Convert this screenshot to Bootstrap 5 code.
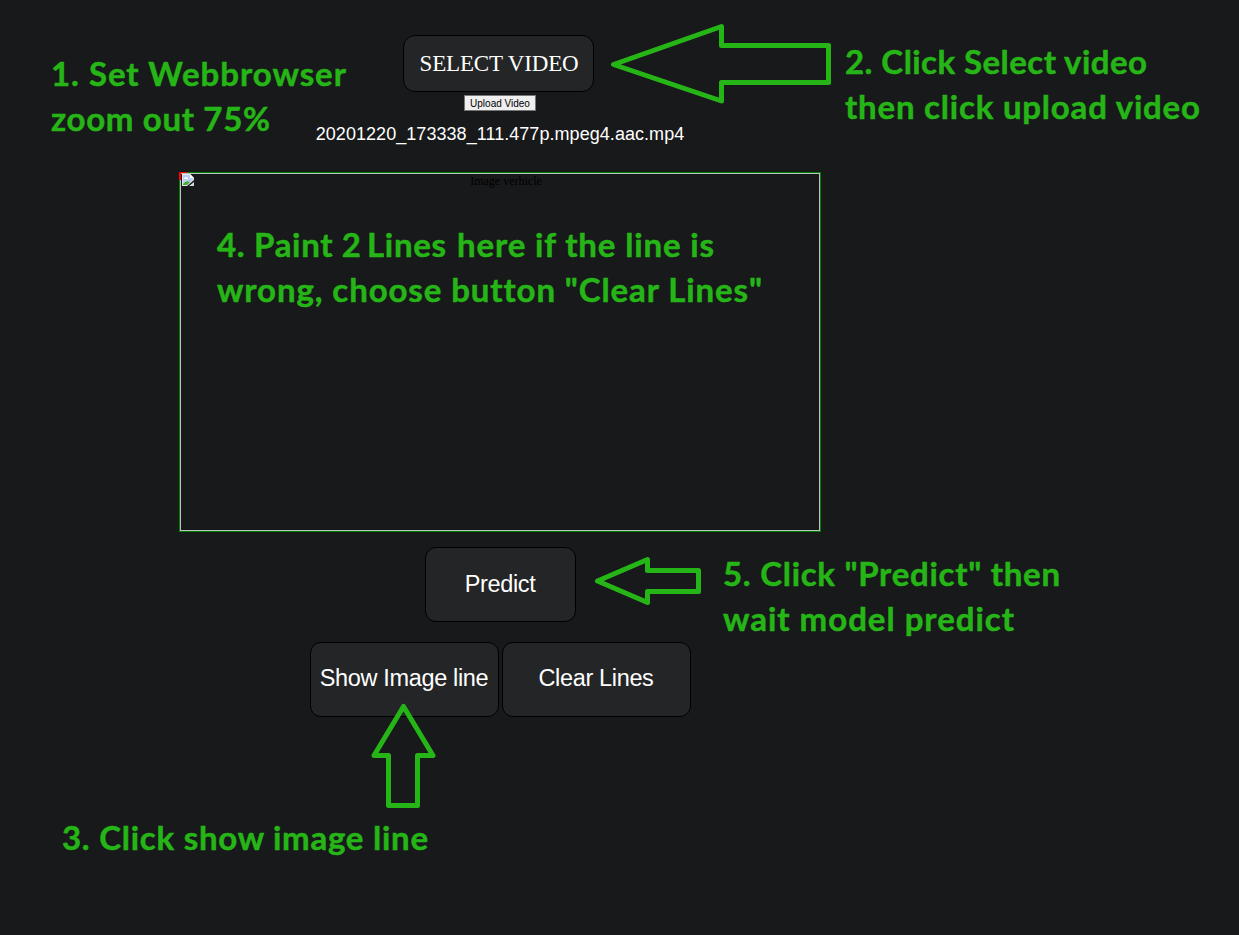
<!DOCTYPE html>
<html lang="en">
<head>
<meta charset="utf-8">
<title>Vehicle line prediction</title>
<link rel="stylesheet" href="https://cdn.jsdelivr.net/npm/bootstrap@5.3.0/dist/css/bootstrap.min.css">
<style>
body { background: #18191a; width: 1239px; height: 935px; overflow: hidden; font-family: "Liberation Sans", sans-serif; }
.app-col { width: 1000px; padding-top: 35px; }
.app-btn, .app-btn:hover { background: #242526; border: 1px solid #000; border-radius: 11px; color: #fff; font-size: 23.5px; line-height: 30px; padding: 0; white-space: nowrap; letter-spacing: -.35px; }
.btn-select { width: 191px; height: 57px; margin-left: -3px; }
.app-btn.btn-select { font-family: "Liberation Serif", serif; font-size: 23px; letter-spacing: -.15px; border-radius: 12px; padding-left: 1px; }
.btn-predict { width: 151px; height: 75px; margin-top: 15px; }
.app-btn.btn-predict { padding-bottom: 2px; }
.line-actions { gap: 3px; margin-top: 20px; }
.btn-line { width: 189px; height: 75px; }
.app-btn.btn-line { padding-bottom: 4px; }
.btn-upload { width: 72px; height: 16px; margin-top: 3px; background: #efefef; border: 1px solid #767676; color: #000; font-size: 10px; line-height: 13px; padding: 0; white-space: nowrap; }
.file-label { color: #fff; font-size: 18px; line-height: 22px; margin-top: 12px; height: 49px; letter-spacing: .05px; }
.line-canvas { width: 642px; height: 360px; border: 1px solid #008000; }
.line-frame { border: 1px solid #c0c0c0; }
.broken-icon { left: -1px; top: -1px; }
.alt-label { font-family: "Liberation Serif", serif; font-size: 12px; line-height: 14px; color: #000; padding-left: 12px; }
.note-layer text { font-family: Lato, "Open Sans", sans-serif; font-weight: 700; font-size: 33px; font-variant-ligatures: none; fill: #26b517; stroke: #26b517; stroke-width: .5; }
.note-layer polygon { fill: none; stroke: #26b517; stroke-width: 5; stroke-linejoin: round; }
</style>
</head>
<body class="position-relative">
<main class="app-col d-flex flex-column align-items-center">
  <button class="btn app-btn btn-select">SELECT VIDEO</button>
  <button class="btn-upload">Upload Video</button>
  <div class="file-label">20201220_173338_111.477p.mpeg4.aac.mp4</div>
  <div class="line-canvas position-relative">
    <div class="line-frame h-100 text-center"><div class="alt-label">Image verhicle</div></div>
    <svg class="broken-icon position-absolute" width="16" height="16" viewBox="0 0 16 16">
      <path d="M0 0h8v1H2v7H0z" fill="#f00"/>
      <path d="M3 2h8l4 4v2l-7 6H3z" fill="#e4e8ee"/>
      <path d="M4 3h7v3h3v2l-6 5H4z" fill="#b9cff2"/>
      <path d="M5 6q2-2 4 0v1H5z" fill="#fff"/>
      <path d="M4 12q3-4 7-2l-3 3H4z" fill="#43ad2c"/>
      <path d="M15 10v4h-5z" fill="#d5d9df"/>
      <path d="M11 2v4h4z" fill="#fff"/>
    </svg>
  </div>
  <button class="btn app-btn btn-predict">Predict</button>
  <div class="line-actions d-flex">
    <button class="btn app-btn btn-line">Show Image line</button>
    <button class="btn app-btn btn-line">Clear Lines</button>
  </div>
</main>

<!-- Instruction notes and arrows drawn over the page -->
<svg class="note-layer position-absolute top-0 start-0" width="1239" height="935" viewBox="0 0 1239 935">
  <text x="51" y="86" textLength="295">1. Set Webbrowser</text>
  <text x="51" y="131" textLength="219">zoom out 75%</text>
  <text x="845" y="74" textLength="302">2. Click Select video</text>
  <text x="845" y="119" textLength="355">then click upload video</text>
  <text x="217" y="257" textLength="144">4. Paint 2</text>
  <text x="367" y="257" textLength="79">Lines</text>
  <text x="457" y="257" textLength="257">here if the line is</text>
  <text x="217" y="302" textLength="545">wrong, choose button "Clear Lines"</text>
  <text x="723" y="586" textLength="337">5. Click "Predict" then</text>
  <text x="723" y="631" textLength="291">wait model predict</text>
  <text x="62" y="850" textLength="366">3. Click show image line</text>
  <polygon points="613.5,64.5 721.5,26.5 721.5,45.5 828.5,45.5 828.5,82.5 721.5,82.5 721.5,101"/>
  <polygon points="597.5,581 647.5,559.5 647.5,570.5 698.5,570.5 698.5,591.5 647.5,591.5 647.5,602.5"/>
  <polygon points="403.5,706.5 433,755.5 417.5,755.5 417.5,805.5 388.5,805.5 388.5,755.5 374,755.5"/>
</svg>
<script src="https://cdn.jsdelivr.net/npm/bootstrap@5.3.0/dist/js/bootstrap.bundle.min.js"></script>
</body>
</html>
